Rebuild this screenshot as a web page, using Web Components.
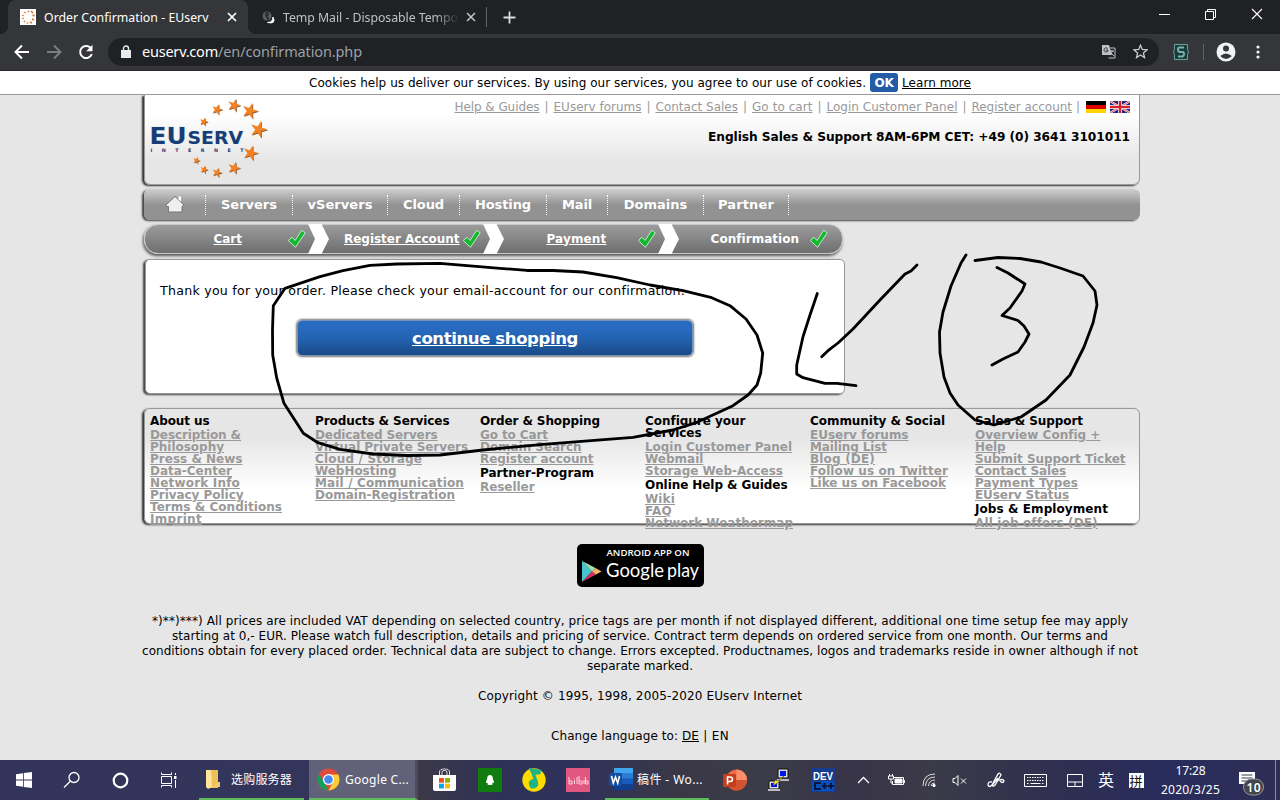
<!DOCTYPE html>
<html lang="en"><head><meta charset="utf-8"><title>Order Confirmation - EUserv</title>
<style>
html,body{margin:0;height:100%}
body{width:1280px;height:800px;overflow:hidden;background:#e6e6e6;font:12px "DejaVu Sans",Verdana,sans-serif;color:#000}
</style></head><body>
<desktop-screen></desktop-screen>
<script>
const fits = [];
const define = (name, css, html) => customElements.define(name, class extends HTMLElement {
  constructor(){ super(); this.attachShadow({mode:'open'}).innerHTML =
    `<style>*{box-sizing:border-box}${css}</style>` + (typeof html === 'function' ? html(this) : html); }
});

/* Text that spreads its letters over a given width */
customElements.define('fit-text', class extends HTMLElement {
  constructor(){ super(); this.attachShadow({mode:'open'}).innerHTML =
    `<style>:host{display:inline-block;white-space:pre;text-decoration:inherit}span{display:inline-block;text-decoration:inherit}</style><span><slot></slot></span>`; fits.push(this); }
  fit(){
    const s = this.shadowRoot.querySelector('span'), w = +this.getAttribute('w');
    const n = this.textContent.length, r = s.getBoundingClientRect().width;
    if (r) s.style.letterSpacing = ((w - r) / n) + 'px';
    this.style.width = w + 'px';
  }
});

define('browser-tabs', `
:host{display:flex;height:34px;background:#202124;align-items:center;font:12.3px "Noto Sans","Open Sans",sans-serif;color:#fff}
.tab{display:flex;align-items:center;width:240px;height:34px;margin-left:8px;padding:0 10px 0 12px;background:#35363a;border-radius:8px 8px 0 0;position:relative}
.tab:before,.tab:after{content:"";position:absolute;bottom:0;width:8px;height:8px}
.tab:before{left:-8px;background:radial-gradient(circle at 0 0,transparent 8px,#35363a 8px)}
.tab:after{right:-8px;background:radial-gradient(circle at 100% 0,transparent 8px,#35363a 8px)}
.tab fit-text{margin-left:8px}.x{margin-left:auto}
.two{display:flex;align-items:center;width:239px;height:20px;padding-left:14px;border-right:1px solid #5f6368;color:#bdc1c6;margin-top:0}
.two .t{width:176px;margin-left:6px;-webkit-mask:linear-gradient(90deg,#000 152px,transparent 176px)}
.two .x{margin-right:9px}
.plus{margin-left:16px}.win{display:flex;margin-left:auto;margin-bottom:6px;margin-right:17px;gap:35px;align-items:center}
svg{display:block;flex:none}`, `
<div class="tab"><svg width="16" height="16"><path d="M0 0h16v16H0z" fill="#fff"/><path d="M8 2l1 1M11 2l2 2M12.500 6l2 1M12 10l2 1M10 13l2 1M7 13.500l1 1M4 12l1 1M2.500 9l1 1M2.500 6l1 1M4.500 3l1 1" stroke="#d5772f" stroke-width="1.500"/></svg><fit-text w="164.500">Order Confirmation - EUserv</fit-text>
<svg class="x" width="12" height="12"><path d="M2 2l8 8M10 2l-8 8" stroke="#fff" stroke-width="1.700"/></svg></div>
<div class="two"><svg width="15" height="16"><circle cx="5" cy="7" r="4.500" fill="#5b5f64"/><path d="M3 5q4-3 3 1q-4 0-1 2q3 2 0 2" stroke="#202124" fill="none" stroke-width="1.300"/><path d="M5.500 13.500Q11 13.500 11 8Q14.500 15.500 5.500 13.500" fill="#fff" stroke="#fff"/></svg><div class="t"><fit-text w="175">Temp Mail - Disposable Tempo</fit-text></div>
<svg class="x" width="12" height="12"><path d="M2 2l8 8M10 2l-8 8" stroke="#c4c7cb" stroke-width="1.500"/></svg></div>
<svg class="plus" width="13" height="13"><path d="M6.500 .5v12M.5 6.500h12" stroke="#dadce0" stroke-width="1.800"/></svg>
<div class="win"><svg width="11" height="11"><path d="M0 5.500h11" stroke="#fff"/></svg><svg width="11" height="11" fill="none" stroke="#fff"><path d="M.5 2.500h8v8h-8zM2.500 2V.5h8v8H9"/></svg><svg width="12" height="12"><path d="M1 1l10 10M11 1L1 11" stroke="#fff" stroke-width="1.100"/></svg></div>`);

define('browser-toolbar', `
:host{display:flex;height:37px;background:#35363a;align-items:center;padding:0 0 1px 14px;border-bottom:1px solid #28262a;font:14.500px/20px "Noto Sans","Open Sans",sans-serif;color:#fff}
svg{flex:none}.r{margin:0 15px 0 16px}
.omni{display:flex;align-items:center;width:1051px;height:28px;border-radius:14px;background:#202124;padding:0 11px 0 13px}
.omni>svg:first-child{margin-right:11px}.omni fit-text{position:relative;top:-1px}.p{color:#9aa0a6}.tr{margin-left:auto;margin-right:17px}
.ext{margin-left:13px}.d{width:1px;height:16px;background:#5f6368;margin:0 12px 0 13px}.m{margin-left:20px}`, `
<svg width="16" height="16" fill="none" stroke="#fff" stroke-width="2"><path d="M15 8H2M8 1.500L1.500 8L8 14.500"/></svg>
<svg class="r" width="16" height="16" fill="none" stroke="#7b7d80" stroke-width="2"><path d="M1 8h13M8 1.500L14.500 8L8 14.500"/></svg>
<svg width="18" height="18" viewBox="0 0 18 18" style="margin-right:13px;margin-left:0"><path d="M14.800 11A6 6 0 1 1 13.400 4.800" fill="none" stroke="#fff" stroke-width="2"/><path d="M15.500 1.800v6.400H9.200z" fill="#fff"/></svg>
<div class="omni"><svg width="10" height="13" viewBox="0 0 10 13"><path d="M0 5h10v8H0z" fill="#e8eaed"/><path d="M2.500 5V3.500a2.500 2.500 0 0 1 5 0V5" fill="none" stroke="#e8eaed" stroke-width="1.400"/></svg><fit-text w="76">euserv.com</fit-text><fit-text class="p" w="144">/en/confirmation.php</fit-text>
<svg class="tr" width="15" height="15" viewBox="0 0 15 15"><path d="M1 1h7l3 10H1z" fill="#bdc1c6"/><path d="M9 4h5v10H7.500M9 7h4M11 6v2Q10.500 10 9 11M10 9l3 3" fill="none" stroke="#bdc1c6"/><path d="M6.500 4.500A2 2 0 1 0 7 6H5" fill="none" stroke="#35363a"/></svg>
<svg width="15" height="15" viewBox="0 0 15 15"><path d="M7.500 1.200l1.800 4.300 4.700.4-3.600 3 1.100 4.600-4-2.500-4 2.500 1.100-4.600-3.600-3 4.700-.4z" fill="none" stroke="#c8cacd" stroke-width="1.300"/></svg></div>
<svg class="ext" width="18" height="18" viewBox="0 0 18 18"><path d="M2.500 1.500h13v5l1 2.500-1 2.500v5h-13v-5l-1-2.500 1-2.500z" fill="#173c3c" stroke="#6ca09b"/><path d="M12 4.500H7.500Q6 4.500 6 6.500T7.500 9h3Q12 9 12 11t-1.500 2.500H6" fill="none" stroke="#7eb1aa" stroke-width="2"/></svg><div class="d"></div>
<svg width="20" height="20" viewBox="0 0 20 20"><circle cx="10" cy="10" r="9.500" fill="#f1f3f4"/><circle cx="10" cy="6.500" r="3" fill="#35363a"/><path d="M4.200 14Q10 9 15.800 14Q13 17 10 17T4.200 14" fill="#35363a"/></svg>
<svg class="m" width="4" height="16" fill="#f1f3f4"><circle cx="2" cy="3" r="1.600"/><circle cx="2" cy="8" r="1.600"/><circle cx="2" cy="13" r="1.600"/></svg>`);

define('cookie-bar', `
:host{display:flex;height:24px;background:#fff;border-bottom:1px solid #999;align-items:center;padding-left:309px}
b{display:grid;place-items:center;width:28px;height:19px;background:#225ca6;color:#fff;border-radius:3px;margin:0 4px}
u{text-decoration:underline}`, `<fit-text w="557">Cookies help us deliver our services. By using our services, you agree to our use of cookies.</fit-text><b><fit-text w="19">OK</fit-text></b><u><fit-text w="69">Learn more</fit-text></u>`);

const star = (x,y,r) => { let p=''; for(let i=0;i<10;i++){const a=-Math.PI/2+.3+i*Math.PI/5,q=i%2?r*.36:r; p+=(x+q*Math.cos(a)).toFixed(1)+','+(y+q*Math.sin(a)).toFixed(1)+' ';} return `<polygon points="${p}" transform="translate(.7 .8)" fill="#86552f"/><polygon points="${p}" fill="#f58220"/>`; };
define('euserv-logo', `:host{display:block;width:120px;height:84px}text{font-family:"DejaVu Sans";font-weight:bold;fill:#173d75}`, `
<svg width="120" height="84" viewBox="150 97 120 84">
${[[203.7,121.700,4.500],[217,109.500,5.800],[234,105.300,7],[250,111,8.500],[258.500,129.500,9],[250.500,153,8],[234,168,6.700],[217,172.500,5.300],[204,169.500,4.300],[196.400,160.300,3.800]].map(s=>star(...s)).join('')}
<g stroke="#e9edf3" stroke-width="1.500" paint-order="stroke"><text x="149.500" y="144" font-size="23" textLength="37" lengthAdjust="spacingAndGlyphs">EU</text><text x="187.500" y="144" font-size="17.500" textLength="55.500" lengthAdjust="spacingAndGlyphs">SERV</text></g>
<text x="150.500" y="151.500" font-size="4.800" textLength="93">INTERNET</text></svg>`);

define('page-header', `
:host{display:flex;justify-content:space-between;height:90px;border:1px solid #999;border-top:0;border-radius:0 0 6px 6px;background:linear-gradient(#fff 22%,#e6e6e6 75%);box-shadow:-2px 1px 2px #333;padding:2px 9px 0 5px}
.r{display:flex;flex-direction:column;align-items:flex-end}
.l{display:flex;align-items:center;height:19px;color:#999;margin-bottom:13px}.l u{text-decoration:underline}.l i{font-style:normal;width:14px;text-align:center}.l svg{margin-left:4px;margin-top:1px}.l i:last-of-type{width:12px}
b{line-height:16px;font-size:12.200px}`, `
<euserv-logo></euserv-logo><div class="r"><div class="l">${[['Help &amp; Guides',85],['EUserv forums',88],['Contact Sales',82.500],['Go to cart',60.500],['Login Customer Panel',131],['Register account',100.500]].map(a=>`<u><fit-text w="${a[1]}">${a[0]}</fit-text></u><i>|</i>`).join('')}
<svg width="20" height="12" style="margin-left:2px"><path d="M0 0h20v4H0z"/><path d="M0 4h20v4H0z" fill="#d00"/><path d="M0 8h20v4H0z" fill="#ffd500"/></svg>
<svg width="20" height="12"><path d="M0 0h20v12H0z" fill="#1d2680"/><path d="M0 0l20 12M20 0L0 12" stroke="#fff" stroke-width="2"/><path d="M0 0l20 12M20 0L0 12" stroke="#d22" stroke-width=".8"/><path d="M10 0v12M0 6h20" stroke="#e9c9d4" stroke-width="4"/><path d="M10 0v12M0 6h20" stroke="#d8202a" stroke-width="2.200"/></svg></div>
<b><fit-text w="422">English Sales &amp; Support 8AM-6PM CET: +49 (0) 3641 3101011</fit-text></b></div>`);

define('main-nav', `
:host{display:flex;align-items:center;height:31px;margin-top:4px;border-radius:6px;background:linear-gradient(#cfcfcf,#929292 52%,#929292);box-shadow:-2px 1px 2px #444;color:#fff;font:bold 13px "DejaVu Sans"}
div{display:flex;height:20px;align-items:center;justify-content:center;border-right:1px dotted #fff}
`, `<div style="width:62px"><svg width="20" height="19" viewBox="0 0 20 19"><path d="M10 1.500L19 10l-2 1.500V17H3.500v-5.500H1V10z" fill="#efefef" stroke="#777"/><path d="M13.500 1.500H16v5l-2.500-2z" fill="#fff"/></svg></div>
${[['Servers',56,87],['vServers',65,95],['Cloud',41,72],['Hosting',56,87],['Mail',30,61],['Domains',63.500,96],['Partner',56,85]].map(a=>`<div style="width:${a[2]}px"><fit-text w="${a[1]}">${a[0]}</fit-text></div>`).join('')}`);

define('order-steps', `
:host{display:flex;width:699px;height:30px;margin:4px 0 0 0;border:1px solid #c6c6c6;border-radius:14px;background:linear-gradient(#9c9c9c,#6e6e6e);box-shadow:-1px 2px 3px #555;color:#fff;font:bold 12px "DejaVu Sans"}
div{display:flex;align-items:center;justify-content:center;width:174.700px;position:relative;flex:none;padding-bottom:1px}
div:first-of-type{width:169.400px;padding-right:4px}
u{text-decoration:underline}.c{position:absolute;right:8px;top:4px}.v{position:absolute;right:-15px;top:-1px}
div:last-of-type{padding-left:7px}div:last-of-type .c{right:10px}`, `
${[['Cart',28.500],['Register Account',115.500],['Payment',60],['Confirmation',88]].map((a,i)=>`<div>${i<3?'<u>':''}<fit-text w="${a[1]}">${a[0]}</fit-text>${i<3?'</u>':''}<svg class="c" width="19" height="20"><path d="M1.300 11.500l3.700-3.300 3.100 3.300L14.600 1.300l3.600 2.500-9.700 14.500z" fill="#12b92f" stroke="#d5edd5" stroke-width=".9"/></svg>${i<3?'<svg class="v" width="21" height="30"><path d="M0 0h13.500L21 15 13.500 30H0L7 15z" fill="#fff"/></svg>':''}</div>`).join('')}`);

define('order-message', `
:host{display:flex;flex-direction:column;width:700px;height:135px;margin:5px 0 0 1px;border:1px solid #999;border-radius:5px;background:#fff;box-shadow:-2px 1px 2px #444}
p{margin:23px 0 0 14px;line-height:16px;font-size:12.600px}
a{display:grid;place-items:center;align-self:center;width:396px;height:36px;margin-top:21px;border-radius:5px;background:linear-gradient(#286bc0 20%,#2463b1 50%,#194a88);border:1px solid #7a93b2;box-shadow:0 0 2px 1px #777;color:#fff;font:bold 16.500px "DejaVu Sans";text-decoration:underline}`,
`<p><fit-text w="525">Thank you for your order. Please check your email-account for our confirmation.</fit-text></p><a><fit-text w="166">continue shopping</fit-text></a>`);

define('footer-links', `
:host{display:grid;grid-template-columns:repeat(6,165px);height:116px;margin-top:14px;border:1px solid #999;border-radius:6px;background:linear-gradient(#e6e6e6 25%,#fff 70%);box-shadow:-2px 1px 2px #333;padding:4px 0 0 5px;font:bold 12px/12px "DejaVu Sans"}
div{display:flex;flex-direction:column;align-items:flex-start}
h4{margin:0;font:inherit;padding:2px 0;display:flex;flex-direction:column}u{color:#999;height:12px;text-decoration:underline}`,
[
 ['#About us:59.500','Description &amp;:91','Philosophy:74','Press &amp; News:92.500','Data-Center:82','Network Info:90','Privacy Policy:93.500','Terms &amp; Conditions:132','Imprint:52'],
 ['#Products &amp; Services:134.500','Dedicated Servers:122.500','Virtual Private Servers:153','Cloud / Storage:107','WebHosting:81.500','Mail / Communication:149','Domain-Registration:140'],
 ['#Order &amp; Shopping:120','Go to Cart:68','Domain Search:101.500','Register account:113.500','#Partner-Program:114','Reseller:54.500'],
 ['#Configure your:100|Services:56.500','Login Customer Panel:147','Webmail:58.500','Storage Web-Access:138','#Online Help &amp; Guides:142.500','Wiki:30','FAQ:27','Network Weathermap:148'],
 ['#Community &amp; Social:135','EUserv forums:98.500','Mailing List:77','Blog (DE):65','Follow us on Twitter:138','Like us on Facebook:136'],
 ['#Sales &amp; Support:108','Overview Config +:125','Help:30.500','Submit Support Ticket:150.500','Contact Sales:91','Payment Types:103','EUserv Status:94','#Jobs &amp; Employment:133','All job offers (DE):122']
].map(c=>'<div>'+c.map(s=>{const f=t=>{const [a,w]=t.split(':');return `<fit-text w="${w}">${a}</fit-text>`};return s[0]=='#'?'<h4>'+s.slice(1).split('|').map(f).join('')+'</h4>':'<u>'+f(s)+'</u>'}).join('')+'</div>').join(''));

define('play-badge', `:host{display:block;width:127px;height:43px;margin:20px 0 0 433px}svg{display:block}text{fill:#fff}`, `
<svg width="127" height="43"><rect width="127" height="43" rx="5"/><path d="M5 17v21l10-10.500z" fill="#46c6cc"/><path d="M5 17l14 7.200-4 3.300z" fill="#a5dfad"/><path d="M5 38l14-7.500-4-3z" fill="#d8315b"/><path d="M15 27.500l4-3.300 5.500 3.200L19 30.500z" fill="#f4b66b"/>
<text x="29.500" y="12" font-family="Open Sans" font-weight="600" font-size="9" textLength="83" lengthAdjust="spacingAndGlyphs">ANDROID APP ON</text><text x="29" y="33" font-family="Lato" font-size="20" textLength="58" lengthAdjust="spacingAndGlyphs">Google</text><text x="90" y="33" font-family="Lato" font-weight="400" font-size="20" textLength="32" lengthAdjust="spacingAndGlyphs">play</text></svg>`);

define('legal-notes', `:host{display:flex;flex-direction:column;align-items:center;line-height:15px;margin:27px 0 0 -4px}.a{margin-top:15px}.b{margin-top:25px;display:flex}u{text-decoration:underline}`, `
<fit-text w="976">*)**)***) All prices are included VAT depending on selected country, price tags are per month if not displayed different, additional one time setup fee may apply</fit-text>
<fit-text w="936">starting at 0,- EUR. Please watch full description, details and pricing of service. Contract term depends on ordered service from one month. Our terms and</fit-text>
<fit-text w="996">conditions obtain for every placed order. Technical data are subject to change. Errors excepted. Productnames, logos and trademarks reside in owner although if not</fit-text>
<fit-text w="106">separate marked.</fit-text>
<fit-text class="a" w="324">Copyright © 1995, 1998, 2005-2020 EUserv Internet</fit-text>
<div class="b"><fit-text w="131">Change language to: </fit-text><u><fit-text w="17">DE</fit-text></u><fit-text w="30"> | EN</fit-text></div>`);

define('web-page', `:host{display:block;height:665px;padding:0 140px 0 144px;overflow:hidden}`, `
<page-header></page-header><main-nav></main-nav><order-steps></order-steps><order-message></order-message><footer-links></footer-links><play-badge></play-badge><legal-notes></legal-notes>`);

const cell = (w, body, ml=0, cls='') => `<div class="${cls}" style="width:${w}px;margin-left:${ml}px">${body}</div>`;
const svg = (w,h,b,a='fill="none" stroke="#fff"') => `<svg width="${w}" height="${h}" viewBox="0 0 ${w} ${h}" ${a}>${b}</svg>`;
define('task-bar', `
:host{display:flex;height:40px;background:linear-gradient(90deg,#32345a 0,#34355a 24%,#3b3848 33%,#2e3157 39%,#2f315a 45%,#3a3847 53%,#3c3c48 60%,#373448 66%,#3b3a48 73%,#302f50 82%,#282c5c 91%,#2e2f56);color:#fff;font:12px "Noto Sans","Noto Sans CJK SC",sans-serif}
div{display:flex;flex:none;align-items:center;justify-content:center;height:40px;white-space:nowrap}
svg{flex:none;display:block}
.app{justify-content:flex-start;border-bottom:2px solid #5dbb5a;gap:6px;padding-left:6px}.on{background:#61627a;padding-left:8px;gap:5px;border-right:3px solid #4d4b5c}
.w{padding-left:4px;gap:4px}
.clock{flex-direction:column;line-height:19px}.k{font:16px "Noto Sans CJK SC",sans-serif;padding-bottom:2px}.n{justify-content:flex-start;padding-left:18px}
.p span{background:#fff;color:#111;width:15px;height:15px;font:13px/15px "Noto Sans CJK SC",sans-serif;text-align:center}`,
 cell(48,svg(16,16,'<path d="M0 2.200L7 1.200V7.600H0zM7.800 1.100L16 0V7.600H7.800zM0 8.400H7V14.800L0 13.800zM7.800 8.400H16V16L7.800 14.900z"/>','fill="#fff"'))+
 cell(48,svg(18,18,'<circle cx="11" cy="6.500" r="5" stroke-width="1.300"/><path d="M7.500 10L1 16.500" stroke-width="1.300"/>'))+
 cell(48,svg(17,17,'<circle cx="8.500" cy="8.500" r="6.800" stroke-width="2.200"/>'))+
 cell(48,svg(17,17,'<path d="M1.500 4.500h10v7h-10zM1.500 .5v2h10v-2M1.500 15.500v-2h10v2M15.500 1v2M15.500 8v8"/><path d="M14 4h2.500v3H14z" fill="#fff" stroke="none"/>'))+
 cell(105,svg(16,20,'<path d="M6 1h7v18H4z" fill="#eec25a"/><path d="M1 1h5l1 17-4 2-2-2z" fill="#ffe69b"/><path d="M13 13h2v5H7z" fill="#f1ca69"/>','')+'<fit-text w="61" style="margin-left:4px">选购服务器</fit-text>',7,'app')+
 cell(109,svg(23,23,'<circle cx="11.500" cy="11.500" r="11" fill="#dd4b3e"/><path d="M2 6L7.500 15 11.500 22.500A11 11 0 0 1 2 6" fill="#159e58"/><path d="M11.500 6.500H21.300A11 11 0 0 1 11.500 22.500L16 14z" fill="#fdcc3b"/><circle cx="11.500" cy="11.500" r="5.500" fill="#fff"/><circle cx="11.500" cy="11.500" r="4.300" fill="#448af5"/>','')+'<fit-text w="64">Google C...</fit-text>',5,'app on')+
 cell(44,svg(23,24,'<path d="M0 7h23v14q0 2-2 2H2q-2 0-2-2z" fill="#fff"/><path d="M6.500 7V4q0-3 5-3t5 3v3M9 7V4q0-1.500 2.500-1.500T14 4v3" fill="none" stroke="#ddd"/><path d="M6 10h5v4.700H6z" fill="#f25022"/><path d="M12 10h5v4.700h-5z" fill="#7fba00"/><path d="M6 15.700h5v4.700H6z" fill="#00a4ef"/><path d="M12 15.700h5v4.700h-5z" fill="#ffb900"/>',''),4)+
 cell(46,svg(24,24,'<path d="M0 0h24v24H0z" fill="#107c10"/><path d="M12 7q2.800 0 2.800 3.500l1.200 3.500q0 1.500-1.200.8l-.8 1.200q1 .5 0 1h-4q-1-.5 0-1l-.8-1.200Q8 15.500 8 14l1.200-3.500Q9.200 7 12 7" fill="#fff"/>',''),1)+
 cell(44,svg(24,24,'<circle cx="12" cy="12" r="11.700" fill="#ffdc00"/><path d="M8 1l10 1.500v2.800l-5.500 1 2.500 7Q17 18 12.500 19.500T7.500 15Q8 11.500 12.500 12L10 5z" fill="#20b384" stroke="#20b384" stroke-width="1.500"/>',''),-1)+
 cell(44,svg(24,24,'<path d="M0 0h24v24H0z" fill="#e0587f"/><path d="M3 9v7h3v-3H3M8.500 12v4M11 9v7M13 8v8h3v-3h-3M18 12v4M19.500 9v7h2.500v-3h-2M8 10v.5M18 10v.5" fill="none" stroke="#ffd4dd"/>',''))+
 cell(104,svg(24,22,'<path d="M5 0h19v22H5z" fill="#2b7cd3"/><path d="M5 0h19v5H5z" fill="#41a5ee"/><path d="M5 16h19v6H5z" fill="#103f91"/><path d="M5 10.500h19V16H5z" fill="#185abd"/><rect y="5" width="13" height="13" rx="1" fill="#164e9f"/><path d="M2.500 8l1.800 7L6.500 9l2.200 6 1.800-7" fill="none" stroke="#fff" stroke-width="1.600"/>','')+'<fit-text w="66">稿件 - Wo...</fit-text>',5,'app w')+
 cell(44,svg(24,22,'<circle cx="13.500" cy="11" r="10.500" fill="#ed6c47"/><path d="M13.500 .5A10.500 10.500 0 0 1 24 11H13.500z" fill="#ff8f6b"/><path d="M3 11h21a10.500 10.500 0 0 1-21 0" fill="#d35230"/><rect y="5" width="13" height="13" rx="1" fill="#c43e1c"/><path d="M4.500 15.500V8h2.500q2.500 0 2.500 2.200T7 12.500H5" fill="none" stroke="#fff" stroke-width="1.600"/>',''),4)+
 cell(44,svg(24,24,'<path d="M11 1h10v9H11zM2 13h10v8H2z" fill="#ddd" stroke="#111"/><path d="M13 3h6v5h-6zM4 15h6v4H4z" fill="#0016e6"/><path d="M10 11h12v2H10zM1 21h12v2H1z" fill="#bbb"/><path d="M17 8l-5 3 1 2-7 5 2-6 4 1z" fill="#ffe91c" stroke="#333" stroke-width=".5"/>',''))+
 cell(44,svg(24,24,'<path d="M0 0h24v24H0z" fill="#173b8d"/><path d="M1 13h22v10H1z" fill="#0950bf"/><path d="M10 15H4v6h6M11 18h5M13.500 15v6M17 18h6M20 15v6" stroke="#07153c" stroke-width="2" fill="none"/><text x="2" y="11.500" font-family="Liberation Sans" font-weight="bold" font-size="10.500" fill="#fff" textLength="20" lengthAdjust="spacingAndGlyphs">DEV</text>',''))+
 cell(37,svg(13,8,'<path d="M1 7l5.500-5.500L12 7" stroke-width="1.300"/>'))+
 cell(28,svg(17,14,'<path d="M6 4.500h9.500v7H4.500V8"/><path d="M7 6h7v4H7z" fill="#fff"/><path d="M16.500 7v3M1.500 1v2M4.500 1v2M.5 3h5v3h-5zM3 6v4h2"/>'))+
 cell(38,svg(14,14,'<path d="M1 13Q1 1 13 1M3.500 13Q4 4 13 4M6.500 13Q7 7 13 7M9 13q0-3 4-3" stroke="#ddd"/><circle cx="12" cy="12.500" r="1.200" fill="#fff"/>'))+
 cell(22,svg(15,13,'<path d="M1 4.500h2l3-3v10l-3-3H1zM9 4.500l5 5M14 4.500l-5 5"/>'))+
 cell(52,svg(18,17,'<path d="M5 10Q1 9 1 13q1 3 4 0L11 2q2-2 3 1L8 13q-3 3-2-1L11 6M10 9q6-3 7 0-1 3-4 0" stroke-width="1.300"/>'))+
 cell(27,svg(23,13,'<path d="M.5.5h22v12H.5z"/><path d="M3 3.500h17M3 6.500h17M3 9.500h2M18 9.500h2" stroke-dasharray="1.500 1"/><path d="M6.500 9.500h10"/>'))+
 cell(52,svg(16,13,'<path d="M.5.5h15v12H.5zM.5 8h15M8 8v4.500"/>'))+
 cell(10,'英',0,'k')+cell(50,'<span>拼</span>',0,'p')+
 cell(59,'<fit-text w="30">17:28</fit-text><fit-text w="59">2020/3/25</fit-text>',0,'clock')+
 cell(60,svg(42,40,'<path d="M1 12h16v12h-6l-3 3v-3H1z" fill="#fff"/><path d="M3.500 15h11M3.500 18h11M3.500 21h7" stroke="#34365b"/><rect x="5.500" y="19" width="20" height="16" rx="8" fill="#43444c" stroke="#999"/><text x="8.500" y="31.500" font-family="Noto Sans" font-weight="600" font-size="12" fill="#fff" textLength="14">10</text><path d="M37.500 0v40" stroke="#888a9e"/>',''),0,'n'));

const line = s => `<polyline points="${s}"/>`;
define('pen-marks', `:host{position:absolute;left:0;top:0;width:1280px;height:760px;pointer-events:none}`, `
<svg width="1280" height="760" fill="none" stroke="#000" stroke-width="2.800" stroke-linecap="round" stroke-linejoin="round">
${line('530,270.700 500,268.300 440,263.300 397,264 370,265.300 343,270.700 320,276.700 285,288.300 273.300,305.700 272.500,330 272.700,355 276.700,378 284,403.300 303.300,433.300 318,442.700 340,449.300 373,454 407,455.500 440,455 483,450 543,444.300 633,437.300 673,430 697,422.300 733,405.700 748,395 757,385 760.700,373 762.700,353 757,335 746,319 730,305.700 711.700,297.700 683,290.700 650,285 616.700,277.700 583,272 553,270.500 527,270.500')}
${line('817.300,293.500 810,315 803,336.700 796.700,365 796.700,374 803,377.700 825,383.300 837,383.300 856,385.700')}
${line('821.700,356.700 828,350.700 838,343 853,329 880,300 905,274 911,271 917,265')}
${line('966,255 961,263 951,286 943,312 939.500,332 940,353 944,377 950,393 958,405 975,420 994,425 1021,417 1046,400 1070,375 1084,347 1093,323 1097,305 1095,291 1083,276 1060,268 1041,262 1020,258.500 998,257.500 975,260.500')}
${line('997,267.500 1008,273 1025,284 1022,291 1010,308 1002,315.500 1018,320.500 1024,326 1029,334 1025,342 1018,352 1003,359 992,365')}</svg>`);

define('desktop-screen', `:host{display:flex;flex-direction:column;width:1280px;height:800px;position:relative;overflow:hidden}:host>*{flex:none}`, `
<browser-tabs></browser-tabs><browser-toolbar></browser-toolbar><cookie-bar></cookie-bar><web-page></web-page><task-bar></task-bar><pen-marks></pen-marks>`);
fits.forEach(f => f.fit());
</script></body></html>
